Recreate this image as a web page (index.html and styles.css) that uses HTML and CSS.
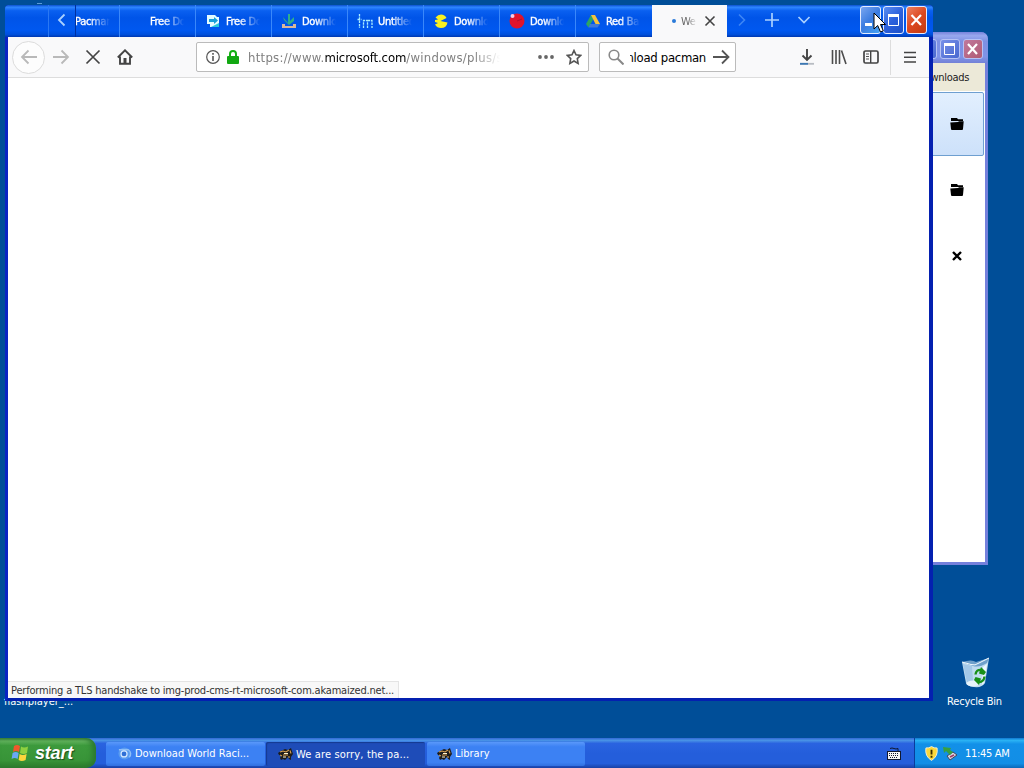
FILE: index.html
```html
<!DOCTYPE html>
<html lang="en">
<head>
    <meta charset="UTF-8">
    <meta name="viewport" content="width=device-width, initial-scale=1.0">
    <title>Desktop</title>
    <link rel="stylesheet" href="styles.css">
</head>
<body>
    <div class="desktop">
        <div class="desktop-icon flash"><span>flashplayer_...</span></div>
        <div class="top-speck"></div>

        <div class="desktop-icon recycle">
            <svg width="32" height="34" viewBox="0 0 32 34">
                <path d="M3 6 L12 9 L22 5 L30 2 L26 27 Q23 32 15 31 Q8 30 7 27 Z" fill="#bfdcf0"/>
                <path d="M3 6 Q13 3 17 6 L30 2 L28 7 Q20 12 14 10 Z" fill="#6fa0cb"/>
                <path d="M4 8 L13 10 L14 25 L8 27 Z" fill="#a3c8e8"/>
                <path d="M28 8 L25 27 L23 29 L24 11 Z" fill="#eef8ff"/>
                <ellipse cx="14" cy="27.500" rx="6.500" ry="3" fill="#e6f3fb"/>
                <path d="M3 6 L12 8.500 Q16 10 20 7 L30 2" fill="none" stroke="#f4fbff"/>
                <g fill="none" stroke="#189018" stroke-width="2.400">
                    <path d="M16.500 18.500 Q17 13 23 14"/>
                    <path d="M25.500 20.500 Q25 26.500 19 26"/>
                </g>
                <path d="M22 11 L27 16 L25 19 L20 17.500 Z M20 29 L15 24 L16.500 21 L22 22.500 Z" fill="#189018"/>
            </svg>
            <span>Recycle Bin</span>
        </div>

        <!-- Library window, behind the browser -->
        <div class="window library">
            <div class="library-title">
                <div class="win-btn dim"><svg width="20" height="20" viewBox="0 0 20 20"><path d="M4 14h7" stroke="#fff" stroke-width="3"/></svg></div>
                <div class="win-btn dim"><svg width="18" height="18" viewBox="0 0 18 18"><path d="M3.500 5v9.500h10V5" fill="none" stroke="#fff"/><path d="M3 4.500h11" stroke="#fff" stroke-width="3"/></svg></div>
                <div class="win-btn dim-close"><svg width="18" height="18" viewBox="0 0 18 18"><path d="M4 4l9 10M13 4L4 14" stroke="#fff" stroke-width="2.200"/></svg></div>
            </div>
            <div class="library-bar">Search Downloads</div>
            <div class="library-list">
                <div class="download selected"><svg width="14" height="14" viewBox="0 0 14 14"><path d="M1 1h6l1 1.300h5V4H1z"/><path d="M.3 5.500L8 5l1-.8h4.700L13 12q0 1-1 1H2q-1 0-1-1z"/></svg></div>
                <div class="download"><svg width="14" height="14" viewBox="0 0 14 14"><path d="M1 1h6l1 1.300h5V4H1z"/><path d="M.3 5.500L8 5l1-.8h4.700L13 12q0 1-1 1H2q-1 0-1-1z"/></svg></div>
                <div class="download"><svg width="14" height="14" viewBox="0 0 14 14"><path d="M3 3l8 8M11 3l-8 8" stroke="#000" stroke-width="2.400"/></svg></div>
            </div>
        </div>

        <!-- Browser window -->
        <div class="window browser">
            <div class="tabs">
                <div class="tab-edge"></div>
                <div class="tab-scroll"><svg width="10" height="14" viewBox="0 0 10 14"><path d="M7.500 1.500L2 7l5.500 5.500" fill="none" stroke="#a9d0ff" stroke-width="1.800"/></svg></div>
                <div class="tab cut"><span class="label">Pacman</span></div>
                <div class="tab"><span class="icon"></span><span class="label">Free Do</span></div>
                <div class="tab">
                    <svg class="icon" viewBox="0 0 16 16"><path d="M2 2h8l2 2h2v10H5v-3H2z" fill="#e4fbff"/><path d="M6 14l8-4v4z" fill="#29c8dd"/><path d="M4 6h5V4l4 3.500L9 11V9H4z" fill="#18a0d8"/></svg>
                    <span class="label">Free Do</span>
                </div>
                <div class="tab">
                    <svg class="icon" viewBox="0 0 16 16"><path d="M1 11v4h14v-4h-3v2H4v-2z" fill="#d8b79a"/><path d="M2 4l5 6 0-9h2v7l4-4v4l-5 4-5-5z" fill="#2fae8c"/></svg>
                    <span class="label">Download</span>
                </div>
                <div class="tab">
                    <svg class="icon" viewBox="0 0 16 16"><path d="M2.500 1v14M.500 6.500h4M6.500 15V7.500h4V15M10.500 7.500H15V15" fill="none" stroke="#a8ecff" stroke-width="1.300" stroke-dasharray="2.500 .8"/></svg>
                    <span class="label">Untitled</span>
                </div>
                <div class="tab">
                    <svg class="icon" viewBox="0 0 16 16"><path d="M7.500 8L14.500 9.500Q13.500 15 8 15 4 15 2 11.500L5 10 2 9V7L5 6.500 2.500 4.500Q5 1.500 8 1.500 12 1.700 13.500 5z" fill="#f8f020"/></svg>
                    <span class="label">Download</span>
                </div>
                <div class="tab">
                    <svg class="icon" viewBox="0 0 16 16"><circle cx="8" cy="8" r="7.500" fill="#e0142c"/><circle cx="3.500" cy="3" r="2" fill="#f8c8e0"/><path d="M8 8l5-2" stroke="#b01030"/></svg>
                    <span class="label">Download</span>
                </div>
                <div class="tab">
                    <svg class="icon" viewBox="0 0 16 16"><path d="M6 2L1 11l2.500 3.500L8.500 6z" fill="#2da562"/><path d="M6 2h4l5 9h-4.500z" fill="#f5c23c"/><path d="M5 11h10l-2.500 3.500h-9z" fill="#3d78dc"/></svg>
                    <span class="label">Red Ball</span>
                </div>
                <div class="tab active">
                    <span class="icon busy"></span>
                    <span class="label">We a</span>
                    <svg width="12" height="12" viewBox="0 0 12 12"><path d="M1.500 1.500l9 9M10.500 1.500l-9 9" stroke="#444" stroke-width="1.600"/></svg>
                </div>
                <div class="tab-tools">
                    <svg width="10" height="14" viewBox="0 0 10 14"><path d="M2 1.500L7.500 7 2 12.500" fill="none" stroke="#3d86f5" stroke-width="1.600"/></svg>
                    <svg width="14" height="14" viewBox="0 0 14 14"><path d="M7 0v14M0 7h14" stroke="#a9d0ff" stroke-width="1.700"/></svg>
                    <svg width="14" height="10" viewBox="0 0 14 10"><path d="M1.500 2L7 7.500 12.500 2" fill="none" stroke="#a9d0ff" stroke-width="1.700"/></svg>
                </div>
                <div class="win-btns">
                    <div class="win-btn min"><svg width="19" height="26" viewBox="0 0 19 26"><path d="M4 17.500h7" stroke="#fff" stroke-width="3"/></svg></div>
                    <div class="win-btn"><svg width="19" height="26" viewBox="0 0 19 26"><path d="M4.500 8v10.500h10V8" fill="none" stroke="#fff"/><path d="M4 8.500h11" stroke="#fff" stroke-width="3"/></svg></div>
                    <div class="win-btn close"><svg width="19" height="26" viewBox="0 0 19 26"><path d="M4.500 8l9.500 10M14 8L4.500 18" stroke="#fff" stroke-width="2.200"/></svg></div>
                </div>
            </div>

            <div class="toolbar">
                <div class="back"><svg width="18" height="16" viewBox="0 0 18 16"><path d="M17 8H2M8.500 1.500L2 8l6.500 6.500" fill="none" stroke="#b9b9b9" stroke-width="1.800"/></svg></div>
                <svg class="fwd" width="18" height="16" viewBox="0 0 18 16"><path d="M1 8h15M9.500 1.500L16 8l-6.500 6.500" fill="none" stroke="#b9b9b9" stroke-width="1.800"/></svg>
                <svg class="stop" width="16" height="16" viewBox="0 0 16 16"><path d="M1.500 1.500l13 13M14.500 1.500l-13 13" stroke="#444" stroke-width="1.700"/></svg>
                <svg class="home" width="16" height="16" viewBox="0 0 16 16"><path d="M.8 8.500L8 1.300l7.200 7.200M3 7.500v7.300h10V7.500" fill="none" stroke="#444" stroke-width="1.900"/><path d="M6.500 14V9h3v5z" fill="#444"/></svg>
                <div class="urlbar">
                    <svg width="14" height="14" viewBox="0 0 14 14"><circle cx="7" cy="7" r="6.300" fill="none" stroke="#555" stroke-width="1.200"/><path d="M7 6v5M7 3v1.800" stroke="#555" stroke-width="1.600"/></svg>
                    <svg class="lock" width="12" height="14" viewBox="0 0 12 14"><path d="M3 7V4q0-3 3-3t3 3v3" fill="none" stroke="#12b012" stroke-width="2"/><rect y="6" width="12" height="8" rx="1" fill="#12a812"/></svg>
                    <div class="url">https://www.<b>microsoft.com</b>/windows/plus/su</div>
                    <svg class="dots" width="16" height="4" viewBox="0 0 16 4" fill="#666"><circle cx="2" cy="2" r="1.900"/><circle cx="8" cy="2" r="1.900"/><circle cx="14" cy="2" r="1.900"/></svg>
                    <svg width="16" height="16" viewBox="0 0 16 16"><path d="M8 1.500l2 4.300 4.700.6-3.400 3.200.8 4.800L8 12l-4.100 2.400.8-4.800L1.300 6.400 6 5.800z" fill="none" stroke="#555" stroke-width="1.600"/></svg>
                </div>
                <div class="searchbar">
                    <svg width="16" height="16" viewBox="0 0 16 16"><circle cx="6" cy="6" r="4.800" fill="none" stroke="#888" stroke-width="1.600"/><path d="M9.500 9.500l6 6" stroke="#888" stroke-width="2"/></svg>
                    <div class="query"><span>download pacman</span></div>
                    <svg width="17" height="16" viewBox="0 0 17 16"><path d="M0 8h15M9 1.500L15.500 8 9 14.500" fill="none" stroke="#555" stroke-width="1.800"/></svg>
                </div>
                <div class="tools">
                    <svg width="16" height="16" viewBox="0 0 16 16"><path d="M8 0v10.500M3.500 6.500L8 11l4.500-4.500" fill="none" stroke="#444" stroke-width="1.900"/><path d="M1 14.800h14" stroke="#b8bcc2" stroke-width="1.800"/><path d="M1 14.800h8" stroke="#3c78b4" stroke-width="1.800"/></svg>
                    <svg width="16" height="16" viewBox="0 0 16 16"><path d="M1.500 1v14M5 1v14M8.500 1v14M10.500 1.500l4.500 13.500" fill="none" stroke="#4c4c4c" stroke-width="1.600"/></svg>
                    <svg width="16" height="16" viewBox="0 0 16 16"><rect x="1" y="2" width="14" height="12" rx="1.500" fill="none" stroke="#444" stroke-width="1.700"/><path d="M7.700 2v12" stroke="#444" stroke-width="1.400"/><path d="M3 5h3M3 7.500h3M3 10h3" stroke="#555"/></svg>
                </div>
                <div class="menu"><svg width="12" height="12" viewBox="0 0 12 12"><path d="M0 1.500h12M0 6.200h12M0 11h12" stroke="#444" stroke-width="1.600"/></svg></div>
            </div>

            <div class="page">
                <div class="status">Performing a TLS handshake to img-prod-cms-rt-microsoft-com.akamaized.net...</div>
            </div>
        </div>

        <svg class="cursor" width="14" height="22" viewBox="0 0 14 22"><path d="M1 1v16l3.700-3.500L7.500 20l2.800-1.200L7.500 12.500H12.500z" fill="#fff" stroke="#000"/></svg>

        <div class="taskbar">
            <div class="start">
                <svg width="18" height="18" viewBox="0 0 18 18"><path d="M3 2q3-2 6 0L8 8Q5 6 2 8z" fill="#f0582c"/><path d="M10 2.500q3 2 7 0L16 9q-3 2-7 0z" fill="#8ed040"/><path d="M1.600 9q3-2 6 0l-1 6q-3-2-6 0z" fill="#6aa8f4"/><path d="M8.600 10q3 2 7 0l-1 6q-4 2-7 0z" fill="#fcd53c"/></svg>
                <span>start</span>
            </div>
            <div class="task">
                <svg width="15" height="15" viewBox="0 0 16 16"><circle cx="8" cy="8" r="6.500" fill="#5a9cf0"/><path d="M2 4h10a5 5 0 0 1 1 8" fill="none" stroke="#8fc0f8" stroke-width="1.500"/><circle cx="7.500" cy="8.500" r="3.200" fill="#2f6fd6" stroke="#d4e8ff" stroke-width="1.300"/></svg>
                <span>Download World Raci...</span>
            </div>
            <div class="task pressed">
                <svg width="15" height="14" viewBox="0 0 15 14"><path d="M0 6l3-2 4-2 3 1 3-2 1 3 1 3-2 3 0 3-2-1-1-2-3 3-2-1-2 1-1-2 1-2-2-1z" fill="#1c1c1c"/><path d="M2 5l3-1 3 1 3-2M5 8h5M12 3.500l1 3M2 8l2 1M11 9v2" stroke="#d8a050" stroke-width="1.100" fill="none"/><path d="M6 6.500h4M5 10h3" stroke="#fff3d0"/></svg>
                <span>We are sorry, the pa...</span>
            </div>
            <div class="task library-task">
                <svg width="15" height="14" viewBox="0 0 15 14"><path d="M0 6l3-2 4-2 3 1 3-2 1 3 1 3-2 3 0 3-2-1-1-2-3 3-2-1-2 1-1-2 1-2-2-1z" fill="#1c1c1c"/><path d="M2 5l3-1 3 1 3-2M5 8h5M12 3.500l1 3M2 8l2 1M11 9v2" stroke="#d8a050" stroke-width="1.100" fill="none"/><path d="M6 6.500h4M5 10h3" stroke="#fff3d0"/></svg>
                <span>Library</span>
            </div>
            <svg class="keyboard" width="14" height="13" viewBox="0 0 14 13"><path d="M3 1.500q2-1 4 0t4 0V4" fill="none" stroke="#101830"/><rect x=".5" y="4.500" width="13" height="8" fill="#f4f4f4" stroke="#101830"/><path d="M2 6.500h10M2 8.500h10M3 10.500h8" stroke="#101830" stroke-dasharray="1 1"/></svg>
            <div class="tray">
                <svg width="13" height="15" viewBox="0 0 14 16"><path d="M7 .5q3 2 6 1.500 1.500 9-6 13.500Q-.5 11 1 2q3 .5 6-1.500z" fill="#fbd83a" stroke="#f4f0d8"/><path d="M7 4v5M7 10.500v2" stroke="#3a2c00" stroke-width="2"/></svg>
                <svg class="safe" width="14" height="15" viewBox="0 0 14 15"><path d="M4 10l6-4 4 3-7 5z" fill="#d6d6e2" stroke="#40485c"/><path d="M7 11l4-2" stroke="#a03860" stroke-width="1.500"/><path d="M0 1l8 1-1 2 3 2-3 3-4-4-2 2z" fill="#38a040"/></svg>
                <span>11:45 AM</span>
            </div>
        </div>
    </div>
</body>
</html>
```
FILE: styles.css
```css
* {
    box-sizing: border-box;
}

body {
    margin: 0;
    font-family: 'DejaVu Sans Condensed', 'DejaVu Sans', sans-serif;
    font-stretch: condensed;
    font-size: 11px;
    letter-spacing: -0.3px;
    overflow: hidden;
}

svg {
    display: block;
    flex: none;
}

.desktop {
    position: relative;
    width: 1024px;
    height: 768px;
    background: #004e98;
    overflow: hidden;
    white-space: nowrap;
}

.desktop-icon {
    position: absolute;
    display: flex;
    flex-direction: column;
    align-items: center;
    gap: 5px;
    color: #fff;
}

.flash {
    left: 4px;
    top: 695px;
    letter-spacing: 0;
}

.recycle {
    left: 934px;
    top: 656px;
    width: 81px;
    letter-spacing: -0.2px;
}

.top-speck {
    position: absolute;
    left: 37px;
    top: 3px;
    width: 5px;
    height: 1px;
    background: #5c9bd8;
}

/* windows */
.window {
    position: absolute;
    display: flex;
    flex-direction: column;
}

.library {
    left: 700px;
    top: 32px;
    width: 288px;
    height: 533px;
    padding: 0 3px 3px;
    background: #7480dc;
    border-radius: 7px 7px 0 0;
}

.library-title {
    display: flex;
    flex: none;
    justify-content: flex-end;
    align-items: center;
    gap: 3px;
    height: 31px;
    padding: 3px 3px 0 0;
    margin: 0 -3px;
    background: linear-gradient(#7783dc, #98a8ee 12%, #7d90e3 30%, #7f94e8 80%, #7381d6);
    border-radius: 7px 7px 0 0;
}

.library-bar {
    flex: none;
    height: 28px;
    padding: 8px 16px 0 0;
    background: #ece9d8;
    color: #222;
    text-align: right;
}

.library-list {
    flex: 1;
    padding-top: 1px;
    background: #fff;
}

.download {
    display: flex;
    justify-content: flex-end;
    align-items: center;
    height: 64px;
    padding-right: 19px;
    margin: 0 1px 2px 0;
    border: 1px solid transparent;
}

.download.selected {
    background: linear-gradient(#e2effe, #cde1fa);
    border-color: #6e9fd0;
    border-radius: 2px;
}

.win-btn {
    display: flex;
    align-items: center;
    justify-content: center;
    width: 21px;
    height: 28px;
    border: 1px solid #e4ecff;
    border-radius: 3px;
    background: linear-gradient(135deg, #5a8df0, #2c60dc 50%, #1c50c8);
}

.win-btn.min {
    background: linear-gradient(135deg, #79a6f0, #3a7be0 50%, #46a4f4);
}

.win-btn.close {
    background: linear-gradient(135deg, #ee8060, #dc4820 50%, #c23a10);
}

.win-btn.dim,
.win-btn.dim-close {
    width: 20px;
    height: 20px;
    border-color: #b6c2f4;
    background: linear-gradient(135deg, #7790e8, #4868d0);
}

.win-btn.dim-close {
    background: linear-gradient(135deg, #c0789c, #b05c74);
    margin-right: 2px;
}

.browser {
    left: 5px;
    top: 5px;
    width: 928px;
    height: 696px;
    border: 3px solid #0a24c4;
    border-right: 4px solid #0420b0;
    border-bottom-color: #0420b0;
    border-top: 0;
    border-radius: 4px 4px 0 0;
    background: #fff;
}

/* tab strip */
.tabs {
    display: flex;
    flex: none;
    height: 32px;
    margin: 0 -4px 0 -3px;
    padding-left: 3px;
    background: linear-gradient(#0b50d0, #2e86ff 7%, #0a60f0 18%, #0054e8 40%, #0058f0 80%, #0050dc 92%, #0038b0);
    border-radius: 4px 4px 0 0;
}

.tab-edge {
    width: 40px;
}

.tab-scroll {
    display: flex;
    align-items: center;
    justify-content: center;
    width: 28px;
    padding-bottom: 2px;
    border-left: 1px solid #2a78f4;
    border-right: 1px solid #0030a0;
}

.tab {
    display: flex;
    flex: none;
    align-items: center;
    width: 76px;
    padding-left: 9px;
    border-left: 1px solid #3a88fa;
    color: #fff;
    -webkit-text-stroke: 0.35px #fff;
}

.tab .icon {
    flex: none;
    width: 16px;
    height: 16px;
    margin-right: 5px;
}

.tab .label {
    width: 34px;
    overflow: hidden;
    -webkit-mask-image: linear-gradient(to right, #000 40%, transparent 100%);
    mask-image: linear-gradient(to right, #000 40%, transparent 100%);
}

.tab.cut {
    width: 43px;
    padding-left: 0;
    border-left: 0;
}

.tab.cut .label {
    text-indent: -1px;
}

.tab.active {
    width: 75px;
    padding-left: 8px;
    background: #f9f9fa;
    border: 0;
    color: #666;
    margin-left: 1px;
    -webkit-text-stroke: 0;
}

.tab.active .label {
    width: 16px;
    margin-right: 7px;
}

.icon.busy {
    display: flex;
    align-items: center;
    justify-content: flex-end;
}

.icon.busy::after {
    content: '';
    width: 4px;
    height: 4px;
    border-radius: 50%;
    background: #2a7ad8;
}

.tab-tools {
    display: flex;
    align-items: center;
    gap: 18px;
    padding: 0 0 2px 10px;
    flex: 1;
}

.win-btns {
    display: flex;
    gap: 2px;
    padding: 1px 6px 0 0;
}

/* toolbar */
.toolbar {
    display: flex;
    flex: none;
    align-items: center;
    height: 41px;
    background: #f9f9fa;
    border-bottom: 1px solid #ddd;
}

.back {
    display: flex;
    align-items: center;
    justify-content: center;
    width: 33px;
    height: 33px;
    margin-left: 4px;
    border: 1px solid #dcdcdc;
    border-radius: 50%;
    background: #fdfdfd;
}

.fwd {
    margin-left: 7px;
}

.stop {
    margin-left: 15px;
}

.home {
    margin-left: 16px;
}

.urlbar,
.searchbar {
    display: flex;
    align-items: center;
    height: 30px;
    background: #fff;
    border: 1px solid #bbb;
    border-radius: 2px;
}

.urlbar {
    width: 393px;
    margin-left: 63px;
    padding: 0 6px 0 9px;
}

.lock {
    margin-left: 7px;
}

.url {
    width: 252px;
    margin-left: 9px;
    overflow: hidden;
    font-size: 13px;
    letter-spacing: 0.27px;
    color: #808080;
    -webkit-mask-image: linear-gradient(to right, #000 90%, transparent);
    mask-image: linear-gradient(to right, #000 90%, transparent);
}

.url b {
    font-weight: normal;
    letter-spacing: -0.1px;
    color: #000;
}

.dots {
    margin: 0 12px 0 auto;
}

.searchbar {
    width: 137px;
    margin-left: 10px;
    padding: 0 5px 0 8px;
}

.query {
    display: flex;
    justify-content: flex-end;
    width: 76px;
    margin: 0 7px 0 6px;
    overflow: hidden;
    font-size: 13px;
    color: #000;
}

.tools {
    display: flex;
    gap: 16px;
    margin-left: 63px;
}

.menu {
    display: flex;
    align-items: center;
    justify-content: center;
    width: 39px;
    height: 35px;
    margin-left: auto;
    border-left: 1px solid #ddd;
}

.page {
    display: flex;
    flex: 1;
    align-items: flex-end;
}

.status {
    width: 391px;
    height: 17px;
    padding: 2px 3px 0;
    background: #f8f8f8;
    border: 1px solid #e4e4e4;
    border-left: 0;
    border-bottom: 0;
    color: #333;
    letter-spacing: -0.19px;
}

.cursor {
    position: absolute;
    left: 873px;
    top: 12px;
}

/* taskbar */
.taskbar {
    position: absolute;
    left: 0;
    bottom: 0;
    display: flex;
    align-items: center;
    width: 1024px;
    height: 30px;
    background: linear-gradient(#3168d5, #4993e6 8%, #2a63e0 18%, #245edb 50%, #245edb 85%, #1941a5);
    color: #fff;
}

.start {
    display: flex;
    align-items: center;
    width: 96px;
    height: 30px;
    padding-left: 11px;
    gap: 6px;
    border-radius: 0 10px 10px 0;
    background: linear-gradient(#3d7f3c, #62b35e 10%, #3c9a3c 25%, #389438 75%, #2c7a2c);
    box-shadow: inset -4px 0 5px #2c7a30;
    margin-right: 10px;
}

.start span {
    font-family: 'Liberation Sans', Arial, sans-serif;
    font-size: 18px;
    font-weight: bold;
    font-style: italic;
    letter-spacing: -0.2px;
    text-shadow: 1px 1px 1px #1c4c1c;
}

.task {
    display: flex;
    align-items: center;
    gap: 3px;
    width: 159px;
    height: 24px;
    padding-left: 11px;
    margin: 1px 1px 0 0;
    border-radius: 2px;
    background: linear-gradient(#5a98fa, #3c81f3 20%, #3c81f3 85%, #3070e0);
    letter-spacing: 0;
}

.task.pressed {
    background: #1e4cb8;
    box-shadow: inset 1px 1px 1px #153a90;
    padding: 1px 0 0 12px;
    letter-spacing: 0.15px;
}

.task.library-task {
    width: 158px;
    padding-left: 10px;
    margin-left: 1px;
}

.keyboard {
    margin: 1px 0 0 auto;
}

.tray {
    display: flex;
    align-items: center;
    width: 110px;
    height: 30px;
    margin-left: 13px;
    padding-left: 10px;
    border-left: 1px solid #0a3c9c;
    background: linear-gradient(#1078d0, #2ab2f4 8%, #1290e8 20%, #128ee6 85%, #0c68b8);
}

.safe {
    margin: 0 8px 0 5px;
}
```
